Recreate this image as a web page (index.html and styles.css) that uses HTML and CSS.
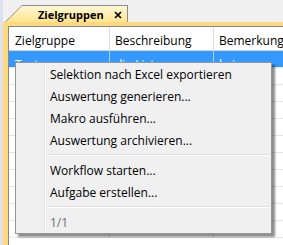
FILE: index.html
```html
<!DOCTYPE html>
<html lang="de">
<head>
    <meta charset="UTF-8">
    <title>Zielgruppen</title>
    <link rel="stylesheet" href="styles.css">
</head>
<body>
    <div class="window">
        <div class="tabstrip">
            <div class="tab">
                <svg class="tab-slant" width="17" height="17" viewBox="0 0 17 17">
                    <defs>
                        <linearGradient id="tabgrad" x1="0" y1="0" x2="0" y2="1">
                            <stop offset="0" stop-color="#fff8d6"/>
                            <stop offset="1" stop-color="#ffe48f"/>
                        </linearGradient>
                    </defs>
                    <polygon points="0,17 17,0 17,17" fill="url(#tabgrad)"/>
                    <line x1="0" y1="17.5" x2="17.5" y2="0" stroke="#8d8d8d" stroke-width="1"/>
                </svg>
                <div class="tab-body">
                    <span class="tab-title">Zielgruppen</span>
                    <svg class="tab-close" width="8" height="8" viewBox="0 0 8 8">
                        <path d="M1 1 L7 7 M7 1 L1 7" stroke="#000" stroke-width="1.7"/>
                    </svg>
                </div>
            </div>
        </div>

        <div class="panel">
            <div class="grid">
                <div class="row head">
                    <div class="cell lead"></div>
                    <div class="cell c1">Zielgruppe</div>
                    <div class="cell c2">Beschreibung</div>
                    <div class="cell c3">Bemerkung</div>
                </div>
                <div class="row selected">
                    <div class="cell lead"></div>
                    <div class="cell c1">Testgruppe</div>
                    <div class="cell c2">die Liste</div>
                    <div class="cell c3">keine</div>
                </div>
                <div class="row"><div class="cell lead"></div><div class="cell c1"></div><div class="cell c2"></div><div class="cell c3"></div></div>
                <div class="row"><div class="cell lead"></div><div class="cell c1"></div><div class="cell c2"></div><div class="cell c3"></div></div>
                <div class="row"><div class="cell lead"></div><div class="cell c1"></div><div class="cell c2"></div><div class="cell c3"></div></div>
                <div class="row"><div class="cell lead"></div><div class="cell c1"></div><div class="cell c2"></div><div class="cell c3"></div></div>
                <div class="row"><div class="cell lead"></div><div class="cell c1"></div><div class="cell c2"></div><div class="cell c3"></div></div>
                <div class="row"><div class="cell lead"></div><div class="cell c1"></div><div class="cell c2"></div><div class="cell c3"></div></div>
                <div class="row"><div class="cell lead"></div><div class="cell c1"></div><div class="cell c2"></div><div class="cell c3"></div></div>
                <div class="row"><div class="cell lead"></div><div class="cell c1"></div><div class="cell c2"></div><div class="cell c3"></div></div>
                <div class="row"><div class="cell lead"></div><div class="cell c1"></div><div class="cell c2"></div><div class="cell c3"></div></div>
                <div class="row"><div class="cell lead"></div><div class="cell c1"></div><div class="cell c2"></div><div class="cell c3"></div></div>
            </div>
        </div>

        <!-- context menu over the grid -->
        <div class="menu">
            <div class="menu-item"><span class="gutter"></span><span class="label">Selektion nach Excel exportieren</span></div>
            <div class="menu-item"><span class="gutter"></span><span class="label">Auswertung generieren...</span></div>
            <div class="menu-item"><span class="gutter"></span><span class="label">Makro ausführen...</span></div>
            <div class="menu-item"><span class="gutter"></span><span class="label">Auswertung archivieren...</span></div>
            <div class="menu-sep"><span class="gutter"></span><span class="label"><span class="sep-line"></span></span></div>
            <div class="menu-item"><span class="gutter"></span><span class="label">Workflow starten...</span></div>
            <div class="menu-item"><span class="gutter"></span><span class="label">Aufgabe erstellen...</span></div>
            <div class="menu-sep"><span class="gutter"></span><span class="label"><span class="sep-line"></span></span></div>
            <div class="menu-item disabled"><span class="gutter"></span><span class="label">1/1</span></div>
        </div>
    </div>
</body>
</html>
```

FILE: styles.css
```css
body {
    margin: 0;
    font-family: "Open Sans", "Noto Sans", sans-serif;
    font-size: 12px;
    color: #000;
    background-color: #f0f0f0;
}
.window {
    position: relative;
    height: 245px;
    overflow: hidden;
    border-left: 3px solid #dde0ef;
}
.tabstrip {
    height: 22px;
    display: flex;
    align-items: flex-end;
    padding-left: 2px;
    background-color: #f0f0f0;
}
.tab {
    display: flex;
    height: 17px;
}
.tab-slant {
    display: block;
}
.tab-body {
    width: 89px;
    height: 16px;
    display: flex;
    align-items: center;
    padding-left: 16px;
    background: linear-gradient(#fff8d6, #ffe48f);
    border-top: 1px solid #8d8d8d;
    border-right: 1px solid #8d8d8d;
}
.tab-title {
    font-weight: bold;
    font-size: 11px;
    width: 76px;
    flex-shrink: 0;
    padding-top: 1px;
}
.tab-close {
    display: block;
    margin-top: 2px;
}
.panel {
    border-top: 4px solid #ffd97e;
    border-left: 5px solid #ffd97e;
}
.grid {
    height: 230px;
    background-color: white;
    border-top: 1px solid #828790;
    border-left: 1px solid #828790;
}
.row {
    display: flex;
    height: 16px;
    border-bottom: 1px solid #e6e6e6;
}
.row.head {
    height: 23px;
    border-bottom-color: #d5d5d5;
}
.row.head .cell {
    padding-top: 3px;
    border-right-color: #dcdcdc;
}
.cell {
    display: flex;
    align-items: center;
    padding-left: 1px;
    white-space: nowrap;
    overflow: hidden;
    border-right: 1px solid #e6e6e6;
}
.cell.lead {
    width: 5px;
    padding: 0;
    border-right: none;
}
.c1 {
    width: 94px;
}
.c2 {
    width: 98px;
    padding-left: 5px;
}
.c3 {
    flex: 1;
    padding-left: 5px;
    border-right: none;
}
.row.selected {
    background-color: #3399ff;
    color: white;
}
.row.selected .cell {
    align-items: flex-start;
    padding-top: 5px;
    border-right-color: #a8d0ff;
}
.row.selected .cell.lead {
    padding-top: 0;
}
.menu {
    position: absolute;
    left: 12px;
    top: 62px;
    width: 255px;
    background-color: #f0f0f0;
    border: 1px solid #979797;
    box-shadow: 3px 3px 2px rgba(0, 0, 0, 0.45);
}
.menu-item, .menu-sep {
    display: flex;
}
.menu-item {
    height: 22px;
}
.menu-sep {
    height: 8px;
}
.gutter {
    width: 28px;
    border-right: 1px solid #e2e3e3;
}
.label {
    flex: 1;
    display: flex;
    align-items: center;
    padding-left: 4px;
    border-left: 1px solid white;
}
.menu-sep .label {
    padding-left: 0;
    margin-right: 1px;
}
.sep-line {
    flex: 1;
    height: 0;
    border-top: 1px solid #e0e0e0;
    border-bottom: 1px solid white;
}
.menu-item.disabled {
    color: #6d6d6d;
}
```
